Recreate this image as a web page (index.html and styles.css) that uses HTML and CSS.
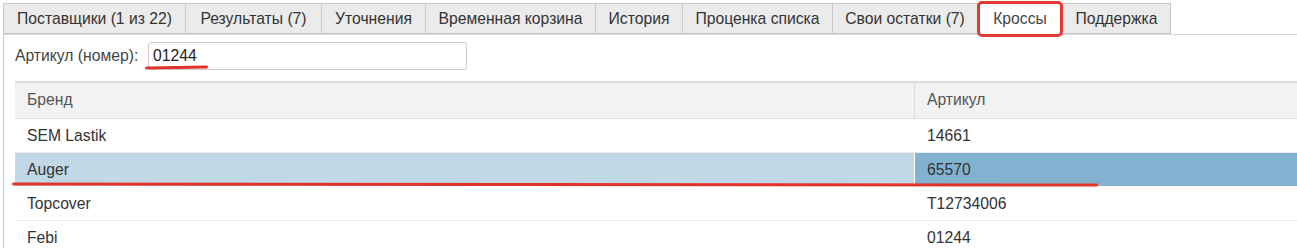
FILE: index.html
```
<!DOCTYPE html>
<html lang="ru">
<head>
<meta charset="utf-8">
<link rel="stylesheet" href="styles.css">
</head>
<body>
<div class="page">
  <div class="tabs">
    <div class="tab">Поставщики (1 из 22)</div>
    <div class="tab">Результаты (7)</div>
    <div class="tab">Уточнения</div>
    <div class="tab">Временная корзина</div>
    <div class="tab">История</div>
    <div class="tab">Проценка списка</div>
    <div class="tab">Свои остатки (7)</div>
    <div class="tab active">Кроссы</div>
    <div class="tab">Поддержка</div>
  </div>
  <div class="panel">
    <div class="search">
      <label class="label">Артикул (номер):</label>
      <div class="input">01244</div>
    </div>
    <div class="table">
      <div class="row head">
        <div class="cell c1">Бренд</div>
        <div class="cell c2">Артикул</div>
      </div>
      <div class="row">
        <div class="cell c1">SEM Lastik</div>
        <div class="cell c2">14661</div>
      </div>
      <div class="row sel">
        <div class="cell c1">Auger</div>
        <div class="cell c2">65570</div>
      </div>
      <div class="row">
        <div class="cell c1">Topcover</div>
        <div class="cell c2">T12734006</div>
      </div>
      <div class="row">
        <div class="cell c1">Febi</div>
        <div class="cell c2">01244</div>
      </div>
    </div>
  </div>
  <div class="mark mark-tab"></div>
  <div class="mark mark-input"></div>
  <div class="mark mark-row"></div>
</div>
</body>
</html>
```

FILE: styles.css
```
* { box-sizing: border-box; }
html, body { margin: 0; padding: 0; background: #fff; }
body {
  font-family: "Liberation Sans", Arial, sans-serif;
  font-size: 15.7px;
  color: #333;
  overflow: hidden;
}
.page {
  position: relative;
  width: 1297px;
  height: 248px;
  padding: 3px 0 0 3px;
  overflow: hidden;
}
.tabs {
  display: flex;
  height: 31px;
}
.tab {
  height: 31px;
  line-height: 30px;
  text-align: center;
  background: #ebebeb;
  border: 1px solid #c8c8c8;
  border-right: none;
  color: #333;
  white-space: nowrap;
}
.tab:nth-child(1) { width: 182px; }
.tab:nth-child(2) { width: 136px; }
.tab:nth-child(3) { width: 104px; }
.tab:nth-child(4) { width: 170px; }
.tab:nth-child(5) { width: 87px; }
.tab:nth-child(6) { width: 150px; }
.tab:nth-child(7) { width: 145px; }
.tab:nth-child(8) { width: 85px; }
.tab:nth-child(9) { width: 109px; }
.tab:last-child { border-right: 1px solid #c8c8c8; }
.tab.active { background: #fff; border-bottom-color: #fff; color: #444; }
.panel {
  border-left: 1px solid #c8c8c8;
  border-top: 1px solid #d9d9d9;
  padding: 7px 0 0 11px;
  height: 220px;
}
.search {
  display: flex;
  align-items: center;
  gap: 9px;
  height: 28px;
}
.label { color: #444; width: 124px; white-space: nowrap; }
.input {
  width: 319px;
  height: 28px;
  border: 1px solid #ccc;
  border-radius: 3px;
  padding: 0 4px;
  line-height: 26px;
  color: #222;
}
.table {
  margin-top: 11px;
  border-top: 2px solid #dcdcdc;
}
.row {
  display: flex;
  height: 34px;
  border-bottom: 1px solid #ececec;
}
.row.head {
  height: 36px;
  background: #f2f2f2;
  border-bottom: 1px solid #dedede;
}
.cell {
  padding-left: 12px;
  line-height: 33px;
  white-space: nowrap;
}
.c1 { width: 900px; border-right: 1px solid #fff; }
.head .c1 { border-right: 1px solid #dcdcdc; color: #555; }
.head .c2 { color: #555; }
.c2 { flex: 1; }
.sel { border-bottom-color: #fff; }
.sel .c1 { background: #c1d8e6; }
.sel .c2 { background: #82b2d0; }
.mark { position: absolute; pointer-events: none; }
.mark-tab {
  left: 977px;
  top: 1px;
  width: 86px;
  height: 36px;
  border: 3px solid #e53a32;
  border-radius: 5px;
}
.mark-input {
  left: 145px;
  top: 66px;
  width: 63px;
  height: 3px;
  background: #e2322c;
  border-radius: 2px;
  transform: rotate(-1deg);
}
.mark-row {
  left: 12px;
  top: 183px;
  width: 1086px;
  height: 3px;
  background: #e2322c;
  border-radius: 2px;
  transform: rotate(0.06deg);
}
```
